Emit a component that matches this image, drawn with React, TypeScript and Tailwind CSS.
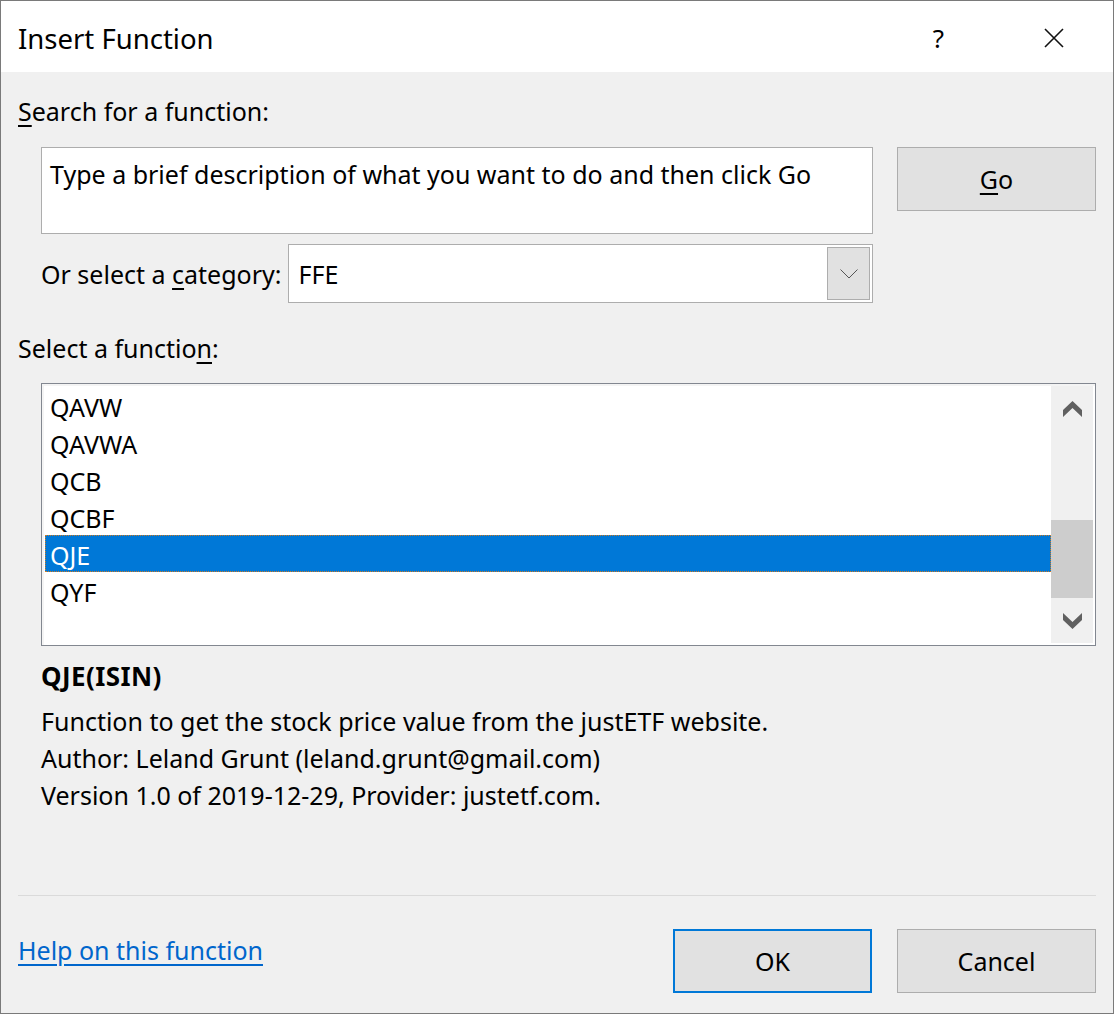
import React from "react";

const FUNCS = ["QAVW", "QAVWA", "QCB", "QCBF", "QJE", "QYF"];
const SELECTED = "QJE";

function CloseIcon() {
  return (
    <svg width="20" height="20" viewBox="0 0 20 20" aria-hidden="true">
      <path d="M1 1 L19 19 M19 1 L1 19" stroke="#111" strokeWidth="1.6" fill="none" />
    </svg>
  );
}

function ScrollArrow({ up }: { up: boolean }) {
  return (
    <svg width="19" height="16" viewBox="0 0 19 16" aria-hidden="true">
      <polygon
        points={up ? "9.5,0 19,9 19,16 9.5,7 0,16 0,9" : "9.5,16 19,7 19,0 9.5,9 0,0 0,7"}
        fill="#606060"
      />
    </svg>
  );
}

function Btn({ children, primary }: { children: React.ReactNode; primary?: boolean }) {
  return (
    <button
      type="button"
      className={
        (primary ? "border-2 border-[#0078d7]" : "border border-[#adadad]") +
        " flex h-[64px] w-[199px] items-center justify-center bg-[#e1e1e1] text-black"
      }
    >
      {children}
    </button>
  );
}

export default function App() {
  return (
    <div
      className="flex h-[1014px] w-[1114px] flex-col border border-[#7a7a7a] bg-[#f0f0f0] text-[25px] leading-[37px] text-black"
      style={{ fontFamily: '"Noto Sans", "Open Sans", sans-serif' }}
    >
      {/* title bar */}
      <div className="flex h-[71px] items-center bg-white pl-[17px]">
        <div className="flex-1 pt-[3px] text-[27.5px]">Insert Function</div>
        <div className="w-[111px] pt-[3px] text-center text-[26px]">?</div>
        <div className="flex w-[119px] justify-center pt-[2px]">
          <CloseIcon />
        </div>
      </div>

      <div className="flex flex-1 flex-col px-[17px]">
        <div className="mt-[21px]">
          <u className="underline-offset-[4px]">S</u>earch for a function:
        </div>

        <div className="mt-[17px] flex gap-[24px] pl-[23px]">
          <div className="flex flex-1 flex-col gap-[10px]">
            <div className="h-[87px] border border-[#adadad] bg-white px-[8px] pt-[8px]">
              Type a brief description of what you want to do and then click Go
            </div>
            <div className="flex items-center gap-[7px]">
              <div className="pt-[2px]">
                Or select a <u className="underline-offset-[4px]">c</u>ategory:
              </div>
              <div className="flex h-[59px] flex-1 items-center border border-[#adadad] bg-white pl-[9px]">
                <div className="flex-1 pt-[2px]">FFE</div>
                <div className="mr-[2px] flex h-[53px] w-[43px] items-center justify-center border border-[#adadad] bg-[#e1e1e1]">
                  <svg width="18" height="10" viewBox="0 0 18 10" aria-hidden="true">
                    <path d="M0.5 0.5 L9 9 L17.5 0.5" stroke="#555" strokeWidth="1" fill="none" />
                  </svg>
                </div>
              </div>
            </div>
          </div>
          <Btn>
            <span>
              <u className="underline-offset-[4px]">G</u>o
            </span>
          </Btn>
        </div>

        <div className="mt-[27px]">
          Select a functio<u className="underline-offset-[4px]">n</u>:
        </div>

        <div className="ml-[23px] mt-[16px] h-[263px] border border-[#828790] bg-white">
          <div className="flex h-full border-2 border-[#f4f4f4] border-r-0 border-b-0">
            <div className="flex-1 pl-[1px] pt-[1px]">
              {FUNCS.map((f) => (
                <div
                  key={f}
                  className={
                    f === SELECTED
                      ? "h-[37px] border border-dotted border-[#d07a20] bg-[#0078d7] pl-[4px] pt-[2px] leading-[35px] text-white"
                      : "h-[37px] pl-[5px] pt-[2px]"
                  }
                >
                  {f}
                </div>
              ))}
            </div>
            <div className="mb-[2px] mr-[2px] flex w-[42px] flex-col bg-[#f0f0f0]">
              <div className="flex h-[42px] items-center justify-center pt-[3px]">
                <ScrollArrow up />
              </div>
              <div className="flex-1 pt-[92px]">
                <div className="h-[78px] bg-[#cdcdcd]" />
              </div>
              <div className="flex h-[42px] items-center justify-center pb-[2px]">
                <ScrollArrow up={false} />
              </div>
            </div>
          </div>
        </div>

        <div className="ml-[23px] mt-[12px] text-[26px] font-bold tracking-[0.4px]">QJE(ISIN)</div>
        <div className="ml-[23px] mt-[8px]">
          <div>Function to get the stock price value from the justETF website.</div>
          <div>Author: Leland Grunt (leland.grunt@gmail.com)</div>
          <div>Version 1.0 of 2019-12-29, Provider: justetf.com.</div>
        </div>

        <div className="mt-[81px] h-px bg-[#dadada]" />

        <div className="mt-[33px] flex items-start gap-[25px]">
          <a href="#" className="mt-[3px] flex-1 text-[#0066cc] underline underline-offset-[4px]">
            Help on this function
          </a>
          <Btn primary>OK</Btn>
          <Btn>Cancel</Btn>
        </div>
      </div>
    </div>
  );
}
